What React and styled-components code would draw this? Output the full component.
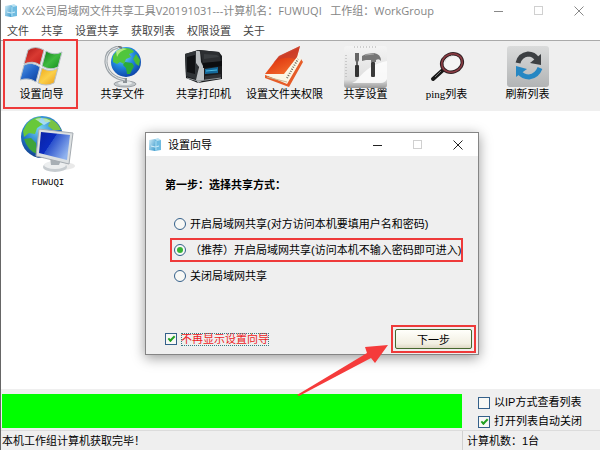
import React, { useState } from "react";
import styled, { createGlobalStyle, css } from "styled-components";

const menuItems = ["文件", "共享", "设置共享", "获取列表", "权限设置", "关于"];

const tools = [
  { label: "设置向导", Icon: FlagIcon, marked: true },
  { label: "共享文件", Icon: GlobeIcon },
  { label: "共享打印机", Icon: PrinterIcon },
  { label: "设置文件夹权限", Icon: BookIcon },
  { label: "共享设置", Icon: ToolsIcon },
  { label: "ping列表", Icon: MagnifierIcon },
  { label: "刷新列表", Icon: RefreshIcon },
];

const shareModes = [
  { id: "open", label: "开启局域网共享(对方访问本机要填用户名和密码)" },
  {
    id: "guest",
    label: "（推荐）开启局域网共享(访问本机不输入密码即可进入)",
    marked: true,
  },
  { id: "close", label: "关闭局域网共享" },
];

function App() {
  const [mode, setMode] = useState("guest");
  const [hideWizard, setHideWizard] = useState(true);
  const [byIp, setByIp] = useState(false);
  const [autoClose, setAutoClose] = useState(true);

  return (
    <Page.Wrapper>
      <CSSReset />

      <TitleBar.Wrapper>
        <AppIcon />
        <TitleBar.Text>
          XX公司局域网文件共享工具V20191031---计算机名：FUWUQI&nbsp;&nbsp; 工作组：WorkGroup
        </TitleBar.Text>
        <WindowButtons faded />
      </TitleBar.Wrapper>

      <Menu.Wrapper>
        {menuItems.map((item) => (
          <Menu.Item key={item} type="button">
            {item}
          </Menu.Item>
        ))}
      </Menu.Wrapper>

      <Toolbar.Wrapper>
        {tools.map(({ label, Icon, marked }) => (
          <Toolbar.Button key={label} type="button" $marked={marked}>
            <Icon />
            <Toolbar.Label>{label}</Toolbar.Label>
          </Toolbar.Button>
        ))}
      </Toolbar.Wrapper>

      <Page.List>
        <Computer.Wrapper type="button">
          <ComputerIcon />
          <Computer.Name>FUWUQI</Computer.Name>
        </Computer.Wrapper>
      </Page.List>

      <Footer.Wrapper>
        <Footer.Progress />
        <Footer.Options>
          <Check.Label>
            <Check.Box
              checked={byIp}
              onChange={(e) => setByIp(e.target.checked)}
            />
            <span>以IP方式查看列表</span>
          </Check.Label>
          <Check.Label>
            <Check.Box
              checked={autoClose}
              onChange={(e) => setAutoClose(e.target.checked)}
            />
            <span>打开列表自动关闭</span>
          </Check.Label>
        </Footer.Options>
      </Footer.Wrapper>
      <Status.Wrapper>
        <Status.Message>本机工作组计算机获取完毕！</Status.Message>
        <Status.Count>计算机数：1台</Status.Count>
      </Status.Wrapper>

      <Dialog.Wrapper role="dialog" aria-labelledby="wizard-title">
        <Dialog.Title>
          <AppIcon />
          <Dialog.Name id="wizard-title">设置向导</Dialog.Name>
          <WindowButtons />
        </Dialog.Title>
        <Dialog.Body>
          <Dialog.Heading>第一步：选择共享方式：</Dialog.Heading>
          <Dialog.Options>
            {shareModes.map(({ id, label, marked }) => (
              <Radio.Label key={id} $marked={marked}>
                <Radio.Dot
                  name="mode"
                  value={id}
                  checked={mode === id}
                  onChange={() => setMode(id)}
                />
                <span>{label}</span>
              </Radio.Label>
            ))}
          </Dialog.Options>
          <Dialog.Footer>
            <Check.Label>
              <Check.Box
                checked={hideWizard}
                onChange={(e) => setHideWizard(e.target.checked)}
              />
              <Dialog.Hint>不再显示设置向导</Dialog.Hint>
            </Check.Label>
            <Dialog.Mark>
              <Dialog.Next type="button">下一步</Dialog.Next>
            </Dialog.Mark>
          </Dialog.Footer>
        </Dialog.Body>
        <Arrow viewBox="0 0 92 52" aria-hidden="true">
          <path d="M0 51L70 9L68 3L91 1L78 19L74 14L2 52Z" fill="#f53b3b" />
        </Arrow>
      </Dialog.Wrapper>
    </Page.Wrapper>
  );
}

function WindowButtons({ faded }) {
  return (
    <Controls.Wrapper $faded={faded}>
      <Controls.Button type="button" aria-label="最小化">
        <svg width="10" height="10" viewBox="0 0 10 10">
          <path d="M0 5.5H9" stroke="currentColor" fill="none" />
        </svg>
      </Controls.Button>
      <Controls.Button type="button" aria-label="最大化" disabled>
        <svg width="10" height="10" viewBox="0 0 10 10">
          <rect x="0.5" y="0.5" width="8" height="8" stroke="currentColor" fill="none" />
        </svg>
      </Controls.Button>
      <Controls.Button type="button" aria-label="关闭">
        <svg width="10" height="10" viewBox="0 0 10 10">
          <path d="M0.5 0.5L9.5 9.5M9.5 0.5L0.5 9.5" stroke="currentColor" fill="none" />
        </svg>
      </Controls.Button>
    </Controls.Wrapper>
  );
}

function AppIcon() {
  return (
    <svg width="14" height="14" viewBox="0 0 14 14" aria-hidden="true">
      <defs>
        <linearGradient id="app-l" x1="0" y1="0" x2="1" y2="1">
          <stop offset="0" stopColor="#d4eef8" />
          <stop offset="1" stopColor="#3f9bcd" />
        </linearGradient>
      </defs>
      <path d="M1 2L7 1V13L1 12Z" fill="url(#app-l)" />
      <path d="M7 1L13 2V12L7 13Z" fill="#6fbbe0" />
      <path d="M7 1L10 0L13 2L9 3Z" fill="#b9e2f3" />
      <path d="M3 8Q7 10 11 8" stroke="#d5effa" fill="none" />
      <path d="M8 3V12" stroke="#a9dcf2" fill="none" />
    </svg>
  );
}

function FlagIcon() {
  return (
    <svg width="44" height="44" viewBox="0 0 44 44" aria-hidden="true">
      <defs>
        <linearGradient id="fr" x1="0" y1="0" x2="1" y2="1">
          <stop offset="0" stopColor="#a81414" />
          <stop offset="0.5" stopColor="#d93a32" />
          <stop offset="1" stopColor="#c01b1b" />
        </linearGradient>
        <linearGradient id="fg" x1="0" y1="0" x2="1" y2="1">
          <stop offset="0" stopColor="#0d7a1a" />
          <stop offset="0.5" stopColor="#3fba3f" />
          <stop offset="1" stopColor="#128a1c" />
        </linearGradient>
        <linearGradient id="fb" x1="0" y1="0" x2="1" y2="1">
          <stop offset="0" stopColor="#5b9fe6" />
          <stop offset="0.5" stopColor="#2365c8" />
          <stop offset="1" stopColor="#0d3c98" />
        </linearGradient>
        <linearGradient id="fy" x1="0" y1="0" x2="1" y2="1">
          <stop offset="0" stopColor="#f0a818" />
          <stop offset="0.5" stopColor="#fbd04a" />
          <stop offset="1" stopColor="#e8981a" />
        </linearGradient>
      </defs>
      <g stroke="#b9c2c9" strokeWidth="1">
        <path d="M8 4Q15 -1 24 4L20 19Q13 14 4 18Z" fill="url(#fr)" />
        <path d="M26 5Q34 10 42 6L38 21Q30 25 22 20Z" fill="url(#fg)" />
        <path d="M4 19Q12 15 20 21L16 36Q9 31 0 34Z" fill="url(#fb)" />
        <path d="M22 22Q30 27 38 22L34 37Q26 41 18 37Z" fill="url(#fy)" />
      </g>
    </svg>
  );
}

function GlobeIcon() {
  return (
    <svg width="44" height="44" viewBox="0 0 44 44" aria-hidden="true">
      <defs>
        <radialGradient id="gl" cx="0.4" cy="0.3" r="0.75">
          <stop offset="0" stopColor="#7cd6ff" />
          <stop offset="0.5" stopColor="#2185dc" />
          <stop offset="1" stopColor="#0c3ea4" />
        </radialGradient>
      </defs>
      <ellipse cx="24" cy="38" rx="11" ry="3" fill="#c2c7ca" stroke="#9a9fa3" />
      <ellipse cx="24" cy="37" rx="7" ry="2" fill="#e6e9ea" />
      <path d="M22 32H26V37H22Z" fill="#8b9196" />
      <path d="M17 1Q4 4 5 17Q7 31 24 34" fill="none" stroke="#9ca3a8" strokeWidth="3" />
      <path d="M17 1Q4 4 5 17Q7 31 24 34" fill="none" stroke="#e4e7e9" strokeWidth="1" />
      <circle cx="25" cy="16" r="15" fill="url(#gl)" />
      <path d="M12 10Q16 3 24 2Q31 2 33 6L28 8L30 11L25 13L23 18L19 16L16 18L12 16Z" fill="#50c63c" />
      <path d="M24 16L31 17L33 20L29 28L26 28L25 22L22 19Z" fill="#2bab3a" />
      <path d="M35 8L39 14L38 20L35 18L32 13Z" fill="#49bb38" />
      <path d="M15 5Q20 1 26 3Q18 5 16 11Z" fill="#c8f392" opacity="0.8" />
      <path d="M17 0L21 2" stroke="#777" strokeWidth="2" />
    </svg>
  );
}

function PrinterIcon() {
  return (
    <svg width="44" height="44" viewBox="0 0 44 44" aria-hidden="true">
      <path d="M3 8L17 4L37 6L40 10V33L16 37L4 32Z" fill="#1a1c1e" />
      <path d="M3 8L16 4V34L4 30Z" fill="#303437" />
      <path d="M5 11L13 9V28L5 26Z" fill="#101214" />
      <path d="M14 5H18L19 16L22 22V34L16 37L14 34L17 21L14 17Z" fill="#bcc0c2" />
      <path d="M17 4L37 6L39 16L21 17L19 8Z" fill="#2c2e31" />
      <path d="M22 8L35 9L37 11L22 13Z" fill="#3b3e41" />
      <path d="M21 17L40 15V20L21 22Z" fill="#0c0d0f" />
      <path d="M23 23L36 21V27L23 28Z" fill="#14699a" />
      <path d="M24 25L35 24" stroke="#4bb9e0" strokeWidth="1" />
      <path d="M23 30L39 28V32L23 35Z" fill="#303235" />
      <path d="M5 32L16 35L39 32" stroke="#8f9497" fill="none" />
    </svg>
  );
}

function BookIcon() {
  return (
    <svg width="44" height="44" viewBox="0 0 44 44" aria-hidden="true">
      <defs>
        <linearGradient id="bk" x1="0" y1="0" x2="0.6" y2="1">
          <stop offset="0" stopColor="#c9483a" />
          <stop offset="0.4" stopColor="#e0613f" />
          <stop offset="0.5" stopColor="#e13b12" />
          <stop offset="1" stopColor="#f26a2b" />
        </linearGradient>
      </defs>
      <path d="M2 29L23 35L38 13L40 16L26 41L2 32Z" fill="#e65c28" />
      <path d="M3 29L24 38L38 14L36 7L19 20Z" fill="#fbf6e5" />
      <path d="M4 31L24 36" stroke="#c9b792" strokeWidth="1" />
      <path d="M24 32L35 13" stroke="#6d6a5e" strokeWidth="2" strokeDasharray="1 1.4" />
      <path d="M16 10L37 0L34 11L21 28L2 28Z" fill="url(#bk)" />
      <path d="M10 17Q20 9 32 13L34 11L37 0L16 10Z" fill="#b93e37" opacity="0.5" />
    </svg>
  );
}

function ToolsIcon() {
  return (
    <svg width="44" height="44" viewBox="0 0 44 44" aria-hidden="true">
      <defs>
        <linearGradient id="tl" x1="0" y1="0" x2="0" y2="1">
          <stop offset="0" stopColor="#f4f4f4" />
          <stop offset="0.8" stopColor="#dedede" />
          <stop offset="1" stopColor="#9b9b9b" />
        </linearGradient>
      </defs>
      <rect x="0" y="0" width="43" height="42" rx="3" fill="url(#tl)" />
      <path d="M12 35Q25 18 43 15V33Q41 37 37 37H8Z" fill="#fff" opacity="0.8" />
      <path d="M10 1H33M2 9V33" stroke="#aaa" strokeDasharray="1 2" />
      <path d="M11 7H15V14L14 16V20H12V16L11 14Z" fill="#666" />
      <rect x="11" y="19" width="4" height="12" rx="1" fill="#333" />
      <path d="M18 10L22 8L30 7Q37 8 37 15Q35 12 32 14V16H27V14H22L18 15Z" fill="#777" />
      <path d="M21 9L30 8" stroke="#aaa" />
      <rect x="27" y="16" width="4" height="15" rx="1" fill="#3a3a3a" />
    </svg>
  );
}

function MagnifierIcon() {
  return (
    <svg width="44" height="44" viewBox="0 0 44 44" aria-hidden="true">
      <path d="M18 24L8 33" stroke="#171717" strokeWidth="4" strokeLinecap="round" />
      <path d="M16 25L10 31" stroke="#777" strokeWidth="1" />
      <ellipse cx="27" cy="17" rx="10.5" ry="9" transform="rotate(-20 27 17)" fill="#f4f4f4" stroke="#302023" strokeWidth="3.5" />
      <ellipse cx="27" cy="17" rx="10.5" ry="9" transform="rotate(-20 27 17)" fill="none" stroke="#8f3c44" strokeWidth="1.5" />
      <path d="M20 16Q21 11 27 10" stroke="#ddd" fill="none" strokeWidth="1" />
    </svg>
  );
}

function RefreshIcon() {
  return (
    <svg width="44" height="44" viewBox="0 0 44 44" aria-hidden="true">
      <defs>
        <linearGradient id="rf" x1="0" y1="0" x2="0" y2="1">
          <stop offset="0" stopColor="#dadbdb" />
          <stop offset="1" stopColor="#b2b4b5" />
        </linearGradient>
      </defs>
      <rect x="1" y="0" width="42" height="41" rx="3" fill="url(#rf)" />
      <path d="M12 17Q14 9 22 8Q28 8 31 13" fill="none" stroke="#3d4043" strokeWidth="5" />
      <path d="M35 8V19L24 17Z" fill="#3d4043" />
      <path d="M34 22Q31 30 23 31Q17 31 13 26" fill="none" stroke="#2687c3" strokeWidth="5" />
      <path d="M10 31V20L21 23Z" fill="#2687c3" />
    </svg>
  );
}

function ComputerIcon() {
  return (
    <svg width="58" height="60" viewBox="0 0 58 60" aria-hidden="true">
      <defs>
        <radialGradient id="cg" cx="0.45" cy="0.3" r="0.7">
          <stop offset="0" stopColor="#78d5f4" />
          <stop offset="0.6" stopColor="#2076c8" />
          <stop offset="1" stopColor="#113d8a" />
        </radialGradient>
        <linearGradient id="cs" x1="0" y1="0" x2="1" y2="0.6">
          <stop offset="0" stopColor="#0a22a4" />
          <stop offset="0.45" stopColor="#0b2cc0" />
          <stop offset="0.46" stopColor="#2a50cc" />
          <stop offset="1" stopColor="#8fb2ee" />
        </linearGradient>
      </defs>
      <circle cx="23" cy="24" r="21" fill="url(#cg)" />
      <path d="M7 12Q13 4 22 4L20 9L24 11L18 15L16 21L10 20L5 24L4 18Z" fill="#68c83a" />
      <path d="M24 5Q37 5 42 17L34 17L29 13L31 9L26 9Z" fill="#79c344" />
      <path d="M5 26L12 25L17 30L18 41Q9 38 5 26Z" fill="#3fa43b" />
      <path d="M16 6Q25 3 32 8L25 12Z" fill="#dcfaff" opacity="0.6" />
      <ellipse cx="42" cy="53" rx="14" ry="4" fill="#d4d4d4" opacity="0.5" />
      <ellipse cx="36" cy="54" rx="12" ry="5" fill="#c7ccd0" />
      <ellipse cx="36" cy="52" rx="11" ry="4" fill="#eceeef" />
      <path d="M31 44L42 47L40 52H32Z" fill="#a8afb5" />
      <path d="M20 16L54 20L50 51L17 43Z" fill="#dce0e2" stroke="#a5abb1" />
      <path d="M22 19L51 22L48 47L20 40Z" fill="url(#cs)" />
    </svg>
  );
}

const redFrame = css`
  &::after {
    content: "";
    position: absolute;
    border: 2px solid #ee3a3a;
    pointer-events: none;
  }
`;

const Page = {
  Wrapper: styled.main`
    position: relative;
    display: flex;
    flex-direction: column;
    min-height: 100vh;
    border-left: 1px solid #666;
    background-color: white;
  `,
  List: styled.section`
    flex: 1;
    padding: 2px 7px;
  `,
};

const TitleBar = {
  Wrapper: styled.header`
    display: flex;
    align-items: center;
    gap: 4px;
    height: 21px;
    padding: 0 1px 0 3px;
    color: #858585;
  `,
  Text: styled.h1`
    flex: 1;
    font-family: "Open Sans", "Noto Sans CJK SC", sans-serif;
    font-size: 11px;
    font-weight: normal;
    line-height: 16px;
    white-space: nowrap;
  `,
};

const Controls = {
  Wrapper: styled.div`
    display: flex;
    color: ${({ $faded }) => ($faded ? "#888" : "#222")};
  `,
  Button: styled.button`
    display: flex;
    align-items: center;
    justify-content: center;
    width: 40px;
    height: 20px;

    &:disabled {
      color: #d0d0d0;
    }
  `,
};

const Menu = {
  Wrapper: styled.nav`
    display: flex;
    gap: 12px;
    height: 20px;
    padding: 0 6px;
    border-bottom: 1px solid #aaa;
  `,
  Item: styled.button`
    line-height: 20px;
    color: #444;
  `,
};

const Toolbar = {
  Wrapper: styled.div`
    display: flex;
    padding-top: 5px;
    height: 70px;
    background-color: #efefef;
  `,
  Button: styled.button`
    position: relative;
    display: flex;
    flex-direction: column;
    align-items: center;
    width: 81px;
    height: 60px;

    ${({ $marked }) => $marked && redFrame}

    &::after {
      inset: -7px 4px -3px 2px;
    }
  `,
  Label: styled.span`
    margin-top: -4px;
    font-family: "Liberation Serif", "Noto Sans CJK SC", sans-serif;
    line-height: 16px;
    color: black;
    white-space: nowrap;
  `,
};

const Computer = {
  Wrapper: styled.button`
    display: flex;
    flex-direction: column;
    align-items: center;
    width: 80px;
  `,
  Name: styled.span`
    font-family: "Liberation Mono", monospace;
    font-size: 9px;
    line-height: 20px;
    color: black;
  `,
};

const Footer = {
  Wrapper: styled.section`
    display: flex;
    gap: 16px;
    padding: 5px 0 0 1px;
    background-color: #efefef;
  `,
  Progress: styled.div`
    flex: 1;
    height: 34px;
    background-color: #00ff00;
  `,
  Options: styled.div`
    display: flex;
    flex-direction: column;
    gap: 2px;
    width: 122px;
  `,
};

const Status = {
  Wrapper: styled.footer`
    display: flex;
    height: 20px;
    border-top: 1px solid #dcdcdc;
    background-color: #efefef;
    line-height: 20px;
  `,
  Message: styled.p`
    flex: 1;
    padding-left: 1px;
  `,
  Count: styled.p`
    width: 138px;
    padding-left: 4px;
    border-left: 1px solid #d0d0d0;
  `,
};

const Check = {
  Label: styled.label`
    display: flex;
    align-items: center;
    gap: 4px;
    line-height: 17px;
    white-space: nowrap;
  `,
  Box: styled.input.attrs({ type: "checkbox" })`
    appearance: none;
    flex: none;
    display: grid;
    place-items: center;
    width: 12px;
    height: 12px;
    border: 1px solid #34608a;
    background-color: #f8f8f5;

    &:checked::before {
      content: "";
      width: 7px;
      height: 4px;
      border: solid #21a121;
      border-width: 0 0 2px 2px;
      transform: translateY(-1px) rotate(-45deg);
    }
  `,
};

const Radio = {
  Label: styled.label`
    position: relative;
    display: flex;
    align-items: center;
    gap: 4px;
    line-height: 18px;
    white-space: nowrap;

    ${({ $marked }) => $marked && redFrame}

    &::after {
      inset: -3px 9px -3px -4px;
    }
  `,
  Dot: styled.input.attrs({ type: "radio" })`
    appearance: none;
    flex: none;
    display: grid;
    place-items: center;
    width: 12px;
    height: 12px;
    border: 1px solid #34608a;
    border-radius: 50%;
    background-color: #f8f8f5;

    &:checked::before {
      content: "";
      width: 6px;
      height: 6px;
      border-radius: 50%;
      background-color: #37b337;
    }
  `,
};

const Dialog = {
  Wrapper: styled.section`
    position: absolute;
    left: 144px;
    top: 132px;
    width: 334px;
    border: 1px solid #858585;
    background-color: #efefef;
    box-shadow: 0 3px 12px rgba(0, 0, 0, 0.4);
  `,
  Title: styled.header`
    display: flex;
    align-items: center;
    gap: 6px;
    height: 23px;
    padding-left: 2px;
    background-color: white;
  `,
  Name: styled.h2`
    flex: 1;
    font-size: 11px;
    font-weight: normal;
    line-height: 18px;
  `,
  Body: styled.div`
    padding: 20px 2px 1px 19px;
  `,
  Heading: styled.h3`
    font-size: 11px;
    line-height: 18px;
  `,
  Options: styled.div`
    display: flex;
    flex-direction: column;
    gap: 8px;
    padding: 21px 4px 0 9px;
  `,
  Footer: styled.div`
    display: flex;
    align-items: center;
    justify-content: space-between;
    padding-top: 40px;
  `,
  Hint: styled.span`
    outline: 1px dotted #397b83;
    outline-offset: -1px;
    line-height: 13px;
    color: #ed1c24;
  `,
  Mark: styled.div`
    padding: 2px;
    border: 2px solid #ee3a3a;
  `,
  Next: styled.button`
    display: block;
    width: 77px;
    height: 20px;
    border: 1px solid #46672d;
    border-radius: 2px;
    background: linear-gradient(#fffffb, #f2efe2 75%, #dfd9c6);
  `,
};

/* Points from the list area up to the next button */
const Arrow = styled.svg`
  position: absolute;
  left: 151px;
  top: 211px;
  width: 92px;
  height: 52px;
`;

const CSSReset = createGlobalStyle`
  *,
  *::before,
  *::after {
    margin: 0;
    padding: 0;
    box-sizing: border-box;
  }

  body {
    font-family: "Liberation Sans", "Noto Sans CJK SC", sans-serif;
    font-size: 11px;
    color: black;
  }

  button {
    border: none;
    background: transparent;
    font: inherit;
    color: inherit;
  }

  svg {
    flex: none;
    display: block;
  }
`;

export default App;
